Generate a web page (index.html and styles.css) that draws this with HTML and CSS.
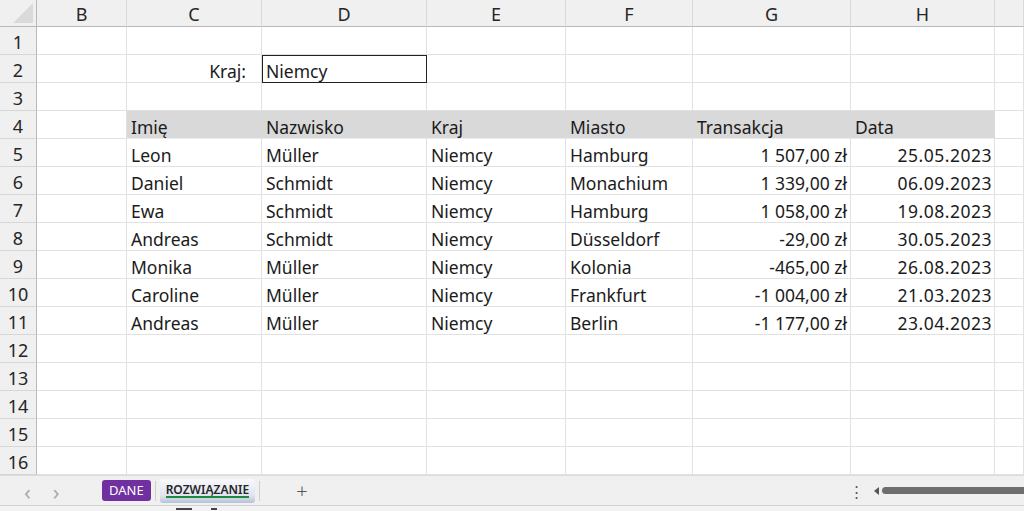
FILE: index.html
```html
<!DOCTYPE html>
<html lang="pl">
<head>
    <meta charset="UTF-8">
    <meta name="viewport" content="width=device-width, initial-scale=1.0">
    <title>Arkusz - ROZWIĄZANIE</title>
    <link rel="stylesheet" href="styles.css">
</head>
<body>

    <div class="sheet">
        <table class="grid">
            <colgroup>
                <col class="c-rh">
                <col class="c-b">
                <col class="c-c">
                <col class="c-d">
                <col class="c-e">
                <col class="c-f">
                <col class="c-g">
                <col class="c-h">
                <col class="c-i">
            </colgroup>
            <thead>
                <tr>
                    <th class="corner"><span class="tri"></span></th>
                    <th class="colh">B</th>
                    <th class="colh">C</th>
                    <th class="colh">D</th>
                    <th class="colh">E</th>
                    <th class="colh">F</th>
                    <th class="colh">G</th>
                    <th class="colh">H</th>
                    <th class="colh"></th>
                </tr>
            </thead>
            <tbody>
                <tr><th class="rowh">1</th><td></td><td></td><td></td><td></td><td></td><td></td><td></td><td></td></tr>
                <tr><th class="rowh">2</th><td></td><td class="label">Kraj:</td><td class="box">Niemcy</td><td></td><td></td><td></td><td></td><td></td></tr>
                <tr><th class="rowh">3</th><td></td><td></td><td></td><td></td><td></td><td></td><td></td><td></td></tr>
                <tr class="head">
                    <th class="rowh">4</th><td></td>
                    <td class="hd">Imię</td>
                    <td class="hd">Nazwisko</td>
                    <td class="hd">Kraj</td>
                    <td class="hd">Miasto</td>
                    <td class="hd">Transakcja</td>
                    <td class="hd last">Data</td>
                    <td></td>
                </tr>
                <tr><th class="rowh">5</th><td></td><td>Leon</td><td>Müller</td><td>Niemcy</td><td>Hamburg</td><td class="num">1 507,00 zł</td><td class="num date">25.05.2023</td><td></td></tr>
                <tr><th class="rowh">6</th><td></td><td>Daniel</td><td>Schmidt</td><td>Niemcy</td><td>Monachium</td><td class="num">1 339,00 zł</td><td class="num date">06.09.2023</td><td></td></tr>
                <tr><th class="rowh">7</th><td></td><td>Ewa</td><td>Schmidt</td><td>Niemcy</td><td>Hamburg</td><td class="num">1 058,00 zł</td><td class="num date">19.08.2023</td><td></td></tr>
                <tr><th class="rowh">8</th><td></td><td>Andreas</td><td>Schmidt</td><td>Niemcy</td><td>Düsseldorf</td><td class="num">-29,00 zł</td><td class="num date">30.05.2023</td><td></td></tr>
                <tr><th class="rowh">9</th><td></td><td>Monika</td><td>Müller</td><td>Niemcy</td><td>Kolonia</td><td class="num">-465,00 zł</td><td class="num date">26.08.2023</td><td></td></tr>
                <tr><th class="rowh">10</th><td></td><td>Caroline</td><td>Müller</td><td>Niemcy</td><td>Frankfurt</td><td class="num">-1 004,00 zł</td><td class="num date">21.03.2023</td><td></td></tr>
                <tr><th class="rowh">11</th><td></td><td>Andreas</td><td>Müller</td><td>Niemcy</td><td>Berlin</td><td class="num">-1 177,00 zł</td><td class="num date">23.04.2023</td><td></td></tr>
                <tr><th class="rowh">12</th><td></td><td></td><td></td><td></td><td></td><td></td><td></td><td></td></tr>
                <tr><th class="rowh">13</th><td></td><td></td><td></td><td></td><td></td><td></td><td></td><td></td></tr>
                <tr><th class="rowh">14</th><td></td><td></td><td></td><td></td><td></td><td></td><td></td><td></td></tr>
                <tr><th class="rowh">15</th><td></td><td></td><td></td><td></td><td></td><td></td><td></td><td></td></tr>
                <tr><th class="rowh">16</th><td></td><td></td><td></td><td></td><td></td><td></td><td></td><td></td></tr>
            </tbody>
        </table>
    </div>

    <div class="tabbar">
        <div class="nav">
            <span class="arrow">&lsaquo;</span>
            <span class="arrow">&rsaquo;</span>
        </div>
        <div class="tab tab-dane">DANE</div>
        <div class="sep"></div>
        <div class="tab tab-active">ROZWIĄZANIE</div>
        <div class="sep"></div>
        <div class="add">+</div>
        <div class="spacer"></div>
        <div class="dots">&#8942;</div>
        <div class="scroll">
            <span class="scroll-left"></span>
            <span class="thumb"></span>
        </div>
    </div>

    <div class="statusbar">
        <span class="st-icon st-a"></span>
        <span class="st-icon st-b"></span>
    </div>

</body>
</html>
```

FILE: styles.css
```css
body {
    margin: 0;
    width: 1024px;
    height: 511px;
    overflow: hidden;
    background-color: #fff;
    font-family: "Noto Sans", "Open Sans", sans-serif;
    color: #1b1b1b;
}
.sheet {
    height: 475px;
    overflow: hidden;
}
.grid {
    border-collapse: separate;
    border-spacing: 0;
    table-layout: fixed;
    width: 1024px;
}
.c-rh { width: 37px; }
.c-b { width: 90px; }
.c-c { width: 135px; }
.c-d { width: 165px; }
.c-e { width: 139px; }
.c-f { width: 127px; }
.c-g { width: 158px; }
.c-h { width: 144px; }
.c-i { width: 29px; }

.grid td {
    height: 27px;
    padding: 0 4px;
    border-right: 1px solid #e1e1e1;
    border-bottom: 1px solid #e1e1e1;
    font-size: 17.5px;
    line-height: 21px;
    white-space: nowrap;
    overflow: hidden;
    vertical-align: bottom;
}
.grid th {
    font-weight: normal;
    background-color: #f0f0f0;
    color: #262626;
    font-size: 18px;
    padding: 0;
}
.colh {
    height: 26px;
    border-right: 1px solid #d9d9d9;
    border-bottom: 1px solid #b9b9b9;
    text-align: center;
    line-height: 24px;
    vertical-align: bottom;
}
.corner {
    height: 26px;
    border-right: 1px solid #b9b9b9;
    border-bottom: 1px solid #b9b9b9;
    position: relative;
}
.tri {
    position: absolute;
    right: 3px;
    bottom: 3px;
    width: 0;
    height: 0;
    border-left: 20px solid transparent;
    border-bottom: 20px solid #dadada;
}
.rowh {
    height: 27px;
    border-right: 1px solid #b9b9b9;
    border-bottom: 1px solid #d6d6d6;
    text-align: center;
    line-height: 23px;
    vertical-align: bottom;
}

.grid td.label {
    text-align: right;
    padding-right: 15px;
}
.grid td.box {
    outline: 1px solid #222;
    outline-offset: -1px;
}
.head td.hd {
    background-color: #d9d9d9;
    border-right-color: #d9d9d9;
    border-bottom-color: #ececec;
}
.grid td.num {
    text-align: right;
    padding-right: 3px;
    font-size: 17.5px;
}
.grid td.date {
    letter-spacing: 0.5px;
    padding-right: 2px;
}

.tabbar {
    height: 29px;
    background-color: #f0f0f0;
    border-top: 1px solid #dcdcdc;
    border-bottom: 1px solid #d2d2d2;
    display: flex;
    align-items: center;
}
.nav {
    display: flex;
    gap: 22px;
    padding-left: 24px;
    width: 78px;
}
.arrow {
    color: #a9a9a9;
    font-size: 22px;
    line-height: 20px;
}
.tab {
    font-size: 13px;
    border-radius: 3px;
    height: 21px;
    line-height: 21px;
    padding: 0 7px;
}
.tab-dane {
    background-color: #7030a0;
    color: #fff;
}
.sep {
    width: 1px;
    height: 20px;
    background-color: #cfcfcf;
    margin: 0 4px;
}
.tab-active {
    height: 24px;
    line-height: 22px;
    font-size: 12px;
    color: #262626;
    font-weight: 600;
    padding: 0 6px;
    background: linear-gradient(#f8f9fc, #dfe3ee 70%, #b8c1d8);
    position: relative;
}
.tab-active::after {
    content: "";
    position: absolute;
    left: 6px;
    right: 6px;
    bottom: 5px;
    height: 2px;
    background-color: #1b8a3f;
}
.add {
    margin-left: 32px;
    font-size: 20px;
    font-weight: 300;
    color: #555;
}
.spacer {
    flex: 1;
}
.dots {
    font-size: 15px;
    color: #555;
    width: 22px;
}
.scroll {
    display: flex;
    align-items: center;
    width: 150px;
    height: 12px;
    padding-left: 3px;
}
.scroll-left {
    width: 0;
    height: 0;
    border-top: 4px solid transparent;
    border-bottom: 4px solid transparent;
    border-right: 5px solid #555;
    margin-right: 3px;
}
.thumb {
    flex: 1;
    height: 7px;
    background-color: #6e6e6e;
    border-radius: 4px 0 0 4px;
}
.statusbar {
    height: 6px;
    background-color: #f3f3f3;
    position: relative;
    overflow: hidden;
}
.st-icon {
    position: absolute;
    top: 2px;
    height: 2px;
    background-color: #444;
}
.st-a {
    left: 176px;
    width: 16px;
}
.st-b {
    left: 211px;
    width: 6px;
}
```
